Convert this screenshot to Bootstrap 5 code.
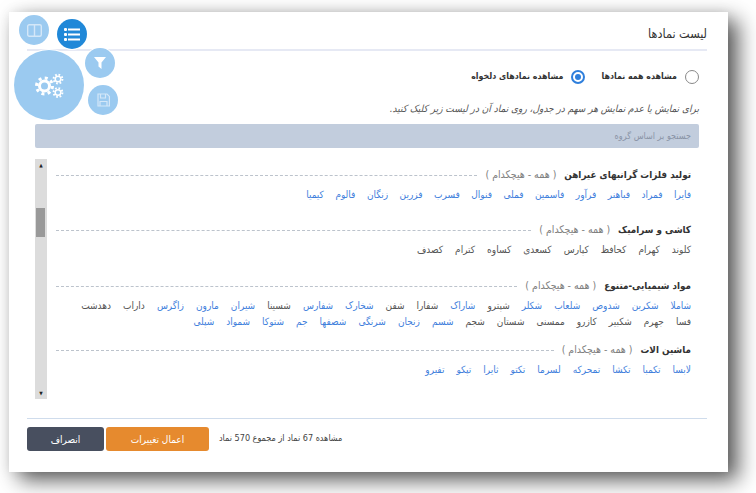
<!DOCTYPE html>
<html lang="fa" dir="rtl">
<head>
<meta charset="utf-8">
<title>لیست نمادها</title>
<link href="https://cdn.jsdelivr.net/npm/bootstrap@5.3.0/dist/css/bootstrap.min.css" rel="stylesheet">
<style>
html,body{height:100%;overflow:hidden}
body{background:#fff;font-family:"DejaVu Sans Condensed","DejaVu Sans",sans-serif;font-size:9px;color:#444;padding:12px 28px 21px 9px}
.sheet{height:460px;width:719px;background:#fff;box-shadow:10px 8px 20px rgba(0,0,0,.65),0 0 12px rgba(0,0,0,.08);padding:0 21px 0 18px;position:relative}
.sheet-title{height:39px;border-bottom:2px solid #e6e9f4;font-size:12.5px;color:#333;padding-top:13px}
.radio-row{height:52px;gap:16px;font-size:8.8px;font-weight:700;color:#333}
.ring{width:14px;height:14px;border-radius:50%;border:1px solid #888;flex:none}
.ring.on{border:2px solid #2f7fdc;padding:2px}
.ring.on i{display:block;width:6px;height:6px;border-radius:50%;background:#2f7fdc}
.hint{margin:-2px 8px 0 0;font-size:10px;font-style:italic;color:#555;height:23px;line-height:16px;white-space:nowrap}
.search-bar{height:24px;margin:0 8px 11px 8px;background:#c2cddd;border-radius:2px;font-size:9px;color:#8a94a6;line-height:24px;padding-right:8px}
.scroll-zone{height:240px;margin-left:8px}
.groups{padding-right:16px;padding-left:9px}
.fake-bar{width:12px;background:#dcdcdc;flex:none;position:relative}
.fake-arrow{height:12px;font-size:5px;line-height:12px;text-align:center;color:#222}
.fake-thumb{height:29px;width:9px;background:#999;margin:37px 2px 0 1px}
.grp{height:55px}
.grp.g2{height:56px}
.grp.g3{height:64px}
.grp-head{height:24px;gap:8px;padding-top:8px}
.grp-name{font-weight:700;font-size:9.8px;color:#333;white-space:nowrap}
.grp-ops{font-size:10.5px;color:#808080;white-space:nowrap}
.dash{flex:1;border-top:1px dashed #bcc3cc}
.syms{gap:0 12px;font-size:10px;line-height:16px;padding-top:4px;margin:0}
.syms.tight{gap:0 11.5px}
.syms span{color:#555;white-space:nowrap}
.syms a{color:#3f80dc;text-decoration:none;white-space:nowrap}
.line-end{flex-basis:100%;height:0}
.foot{margin-top:19px;border-top:1px solid #cfdcec;padding-top:8px;gap:10px}
.foot-note{font-size:9px;color:#444}
.act{height:24px;border-radius:3px;border:0;color:#fff;font-size:10px;padding:0}
.act-ok{width:103px;background:#e68a2e}
.act-no{width:77px;background:#484f5f;margin-right:-8px}
.bub{position:absolute;border-radius:50%;background:#9bcaf0;box-shadow:0 0 0 1px #fff;display:flex;align-items:center;justify-content:center}
.bub svg{display:block}
.b-big{width:70px;height:70px;left:5px;top:38px}
.b-list{width:30px;height:30px;left:48px;top:7px;background:#2088d8}
.b-col{width:30px;height:30px;left:10px;top:3px}
.b-filter{width:30px;height:30px;left:76px;top:36px}
.b-save{width:30px;height:30px;left:79px;top:73px}
</style>
</head>
<body>
<div class="sheet">
  <div class="sheet-title">لیست نمادها</div>
  <div class="radio-row d-flex align-items-center">
    <div class="d-flex align-items-center gap-2 me-2"><span class="ring"></span><span>مشاهده همه نمادها</span></div>
    <div class="d-flex align-items-center gap-2"><span class="ring on"><i></i></span><span>مشاهده نمادهای دلخواه</span></div>
  </div>
  <p class="hint">برای نمایش یا عدم نمایش هر سهم در جدول، روی نماد آن در لیست زیر کلیک کنید.</p>
  <div class="search-bar">جستجو بر اساس گروه</div>
  <div class="scroll-zone d-flex">
    <div class="groups flex-grow-1">
      <div class="grp">
        <div class="grp-head d-flex align-items-center"><span class="grp-name">تولید فلزات گرانبهای غیراهن</span><span class="grp-ops">( همه - هیچکدام )</span><span class="dash"></span></div>
        <div class="syms tight d-flex flex-wrap"><a href="#">فایرا</a><a href="#">فمراد</a><a href="#">فباهنر</a><a href="#">فرآور</a><a href="#">فاسمین</a><a href="#">فملی</a><a href="#">فنوال</a><a href="#">فسرب</a><a href="#">فزرین</a><a href="#">زنگان</a><a href="#">فالوم</a><a href="#">کیمیا</a></div>
      </div>
      <div class="grp g2">
        <div class="grp-head d-flex align-items-center"><span class="grp-name">کاشی و سرامیک</span><span class="grp-ops">( همه - هیچکدام )</span><span class="dash"></span></div>
        <div class="syms d-flex flex-wrap"><span>کلوند</span><span>کهرام</span><span>کحافظ</span><span>کپارس</span><span>کسعدی</span><span>کساوه</span><span>کترام</span><span>کصدف</span></div>
      </div>
      <div class="grp g3">
        <div class="grp-head d-flex align-items-center"><span class="grp-name">مواد شیمیایی-متنوع</span><span class="grp-ops">( همه - هیچکدام )</span><span class="dash"></span></div>
        <div class="syms d-flex flex-wrap"><a href="#">شاملا</a><a href="#">شکربن</a><a href="#">شدوص</a><a href="#">شلعاب</a><a href="#">شکلر</a><span>شپترو</span><a href="#">شاراک</a><span>شفارا</span><span>شفن</span><a href="#">شخارک</a><a href="#">شفارس</a><span>شسینا</span><a href="#">شیران</a><a href="#">مارون</a><a href="#">زاگرس</a><span>داراب</span><span>دهدشت</span><i class="line-end"></i><span>فسا</span><span>جهرم</span><span>شکبیر</span><span>کازرو</span><span>ممسنی</span><span>شستان</span><span>شجم</span><a href="#">شسم</a><a href="#">زنجان</a><a href="#">شرنگی</a><a href="#">شصفها</a><a href="#">جم</a><a href="#">شتوکا</a><a href="#">شمواد</a><a href="#">شپلی</a></div>
      </div>
      <div class="grp">
        <div class="grp-head d-flex align-items-center"><span class="grp-name">ماشین الات</span><span class="grp-ops">( همه - هیچکدام )</span><span class="dash"></span></div>
        <div class="syms d-flex flex-wrap"><a href="#">لابسا</a><a href="#">تکمبا</a><a href="#">تکشا</a><a href="#">تمحرکه</a><a href="#">لسرما</a><a href="#">تکتو</a><a href="#">ثایرا</a><a href="#">تپکو</a><a href="#">تفیرو</a></div>
      </div>
    </div>
    <div class="fake-bar d-flex flex-column">
      <div class="fake-arrow">▲</div>
      <div class="fake-thumb"></div>
      <div class="fake-arrow mt-auto">▼</div>
    </div>
  </div>
  <div class="foot d-flex align-items-center">
    <span class="foot-note me-auto">مشاهده 67 نماد از مجموع 570 نماد</span>
    <button class="act act-ok">اعمال تغییرات</button>
    <button class="act act-no">انصراف</button>
  </div>

  <div class="bub b-big"><svg width="29" height="25" viewBox="0 0 29 25" fill="none" stroke="#fff"><circle cx="9.500" cy="13" r="5" stroke-width="3"/><circle cx="9.500" cy="13" r="8" stroke-width="3" stroke-dasharray="3 3.280"/><circle cx="23" cy="6" r="2.800" stroke-width="1.500"/><circle cx="23" cy="6" r="4.400" stroke-width="2" stroke-dasharray="1.700 1.750"/><circle cx="23" cy="19.500" r="2.800" stroke-width="1.500"/><circle cx="23" cy="19.500" r="4.400" stroke-width="2" stroke-dasharray="1.700 1.750"/></svg></div>
  <div class="bub b-list"><svg width="16" height="13" viewBox="0 0 16 13" fill="#fff"><rect x="0" y="0" width="3" height="3" rx="1"/><rect x="4" y=".5" width="12" height="2"/><rect x="0" y="5" width="3" height="3" rx="1"/><rect x="4" y="5.500" width="12" height="2"/><rect x="0" y="10" width="3" height="3" rx="1"/><rect x="4" y="10.500" width="12" height="2"/></svg></div>
  <div class="bub b-col"><svg width="15" height="13" viewBox="0 0 15 13" fill="none" stroke="#d4e7f8" stroke-width="1.400"><rect x=".7" y=".7" width="13.600" height="11.600" rx="1.500"/><path d="M7.500 1v11"/></svg></div>
  <div class="bub b-filter"><svg width="12" height="12" viewBox="0 0 12 12" fill="#fff"><path d="M0 0h12L7.500 5.500V12L4.500 9.500V5.500z"/></svg></div>
  <div class="bub b-save"><svg width="13" height="14" viewBox="0 0 13 14" fill="none" stroke="#d4e7f8" stroke-width="1.200"><path d="M1 1h9l2.400 2.400V13H1z"/><path d="M3.500 1v4h5V1M3 13V8.500h7V13"/></svg></div>
</div>
</body>
</html>
